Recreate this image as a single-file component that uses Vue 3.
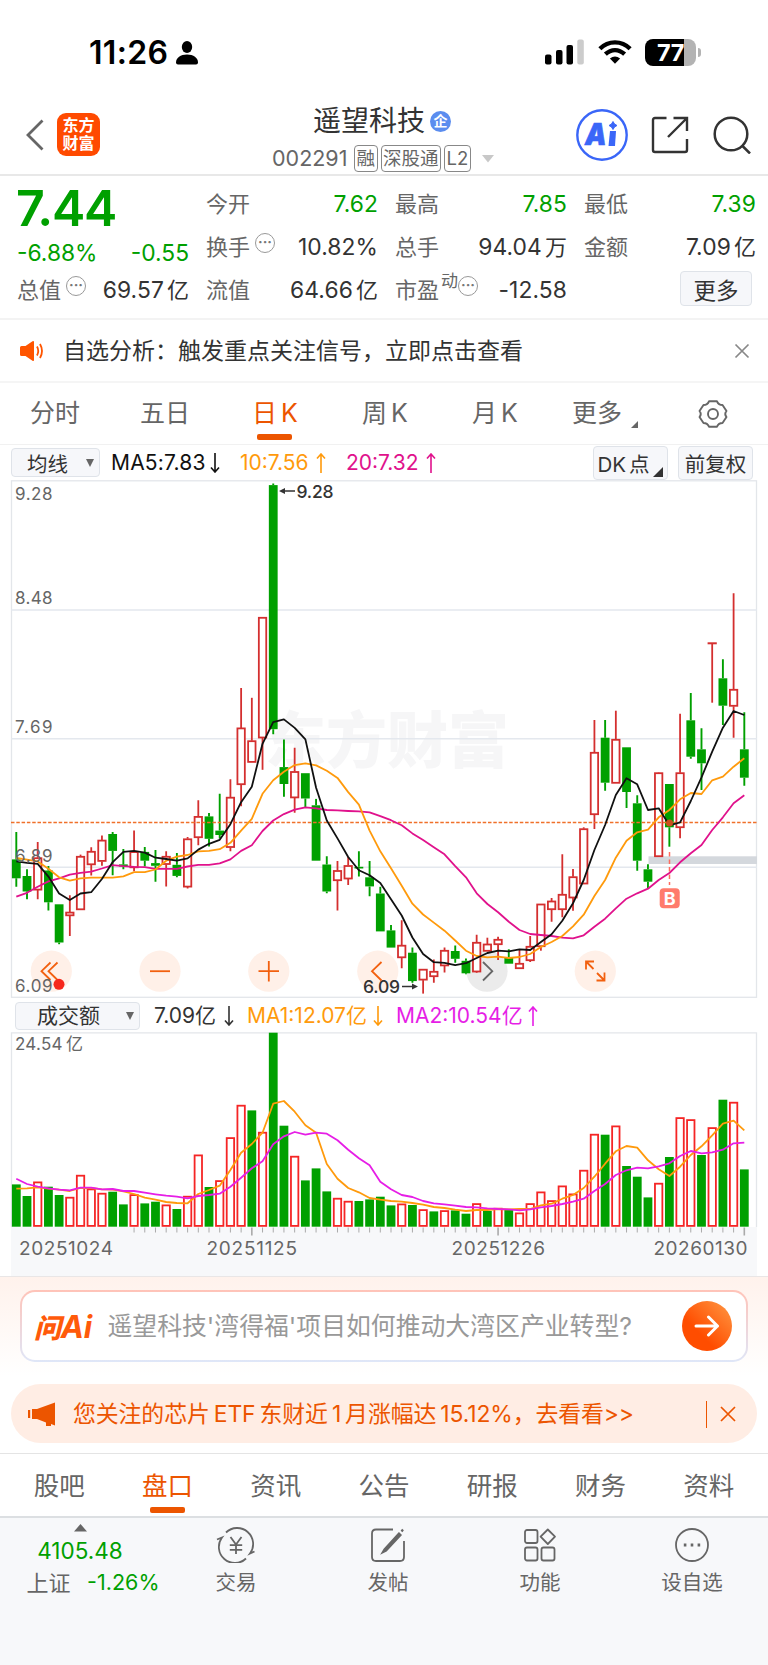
<script setup>
import { ref } from 'vue'

const periods = [['分时'], ['五日'], ['日', 'K'], ['周', 'K'], ['月', 'K']]
const activePeriod = ref('日')
const sections = ['股吧', '盘口', '资讯', '公告', '研报', '财务', '资料']
const activeSection = ref('盘口')
const showNotice = ref(true)
const showPromo = ref(true)

// distance between two trading days
const STEP = 10.706
const x = (i) => 16.3 + i * STEP

// [up, high, body top, body bottom, low]
const candles = [
    [0, 352, 379.4, 398.3, 406.8], [0, 389.2, 396, 411.5, 419.3], [1, 362.1, 377.7, 410.1, 419.3],
    [0, 386.1, 390.5, 422.3, 430.4], [0, 424.3, 424.3, 462.5, 464.2], [1, 415.2, 432.1, 435.8, 456.1],
    [1, 374.6, 376.3, 429.8, 429.8], [1, 367.2, 371.3, 384.8, 395.6], [1, 355.4, 360.1, 381.4, 385.8],
    [0, 352, 354, 370.9, 395.3], [0, 368.9, 384.4, 386.5, 389.2], [1, 350.6, 371.6, 387.8, 391.2],
    [0, 366.9, 371.9, 380.7, 386.5], [0, 369.9, 383.1, 385.8, 401.7], [1, 371.3, 376.3, 384.5, 406.4],
    [0, 373, 384.8, 395.9, 397.3], [1, 357.1, 358.8, 407.1, 408.5], [1, 320.2, 336.4, 357.7, 365.2],
    [0, 333.1, 336.4, 358.8, 366.5], [0, 313.8, 350.6, 355, 358.4], [1, 299.3, 317.2, 367.5, 371.3],
    [1, 208, 247.9, 304.7, 326.3], [1, 217.8, 260.7, 282.4, 282.4], [1, 137.3, 137.3, 258, 289.8],
    [0, 3.5, 5.1, 249.2, 254.3], [0, 259.4, 287.1, 304, 316.8], [1, 267.8, 291.5, 317.9, 332.7],
    [0, 293.2, 293.2, 318.5, 327], [0, 318.9, 325.3, 380.7, 380.7], [0, 376.3, 384.5, 411.5, 413.2],
    [1, 381.1, 390.5, 400.7, 430.4], [1, 377, 385.5, 399, 405.1], [0, 371.3, 386.8, 388.5, 396.6],
    [0, 381.1, 397.3, 406.4, 416.2], [0, 406.8, 413.5, 451.4, 451.4], [0, 445, 450.4, 467.6, 467.6],
    [1, 440.2, 465.2, 477.8, 488.2], [0, 467.6, 472.7, 501.1, 502.8], [1, 489.2, 489.2, 500.1, 513.6],
    [1, 479.4, 491.3, 496.7, 502.8], [1, 467.6, 470.3, 485.9, 492.6], [0, 465.6, 471, 478.8, 482.8],
    [0, 478.4, 480.8, 493.3, 494.3], [1, 454.7, 462.3, 492, 492.7], [1, 457.7, 464, 471.3, 471.3],
    [1, 456.7, 459.3, 464.7, 480], [0, 469.3, 477.7, 483.7, 483.7], [1, 469.3, 483.3, 488.7, 488.7],
    [1, 456, 466.3, 480.7, 482], [1, 424, 424, 466.7, 470.7], [1, 418, 421, 429.7, 441.7],
    [1, 374.3, 414.3, 429.7, 437.3], [1, 389, 396.7, 418, 430.7], [1, 347.3, 348.7, 404, 404],
    [1, 240, 272.3, 334.7, 349], [0, 240, 257.7, 302.7, 310.7], [1, 230.7, 259.3, 303.3, 303.3],
    [0, 267.3, 267.3, 312, 328], [0, 315.3, 323.3, 380.7, 390.7], [0, 384.3, 389.3, 401.7, 408],
    [1, 292.3, 292.7, 376.7, 376.7], [0, 304, 304, 347.3, 366.7], [1, 233.7, 292.7, 347.7, 358.3],
    [0, 213, 240.3, 276.7, 278.7], [0, 248.3, 269.3, 283.3, 310], [1, 162.7, 162.7, 163.7, 222.7],
    [0, 179.3, 198.3, 225.7, 245], [1, 113.3, 209.3, 226.3, 257.7], [0, 232.3, 269.3, 297.7, 305.7],
]

const ma5 = [
    381.4, 382.8, 383.8, 396.6, 413.5, 420, 413.5, 412.2, 399, 382.1, 371.9, 370.9, 372.6, 377.7, 379,
    380.7, 378.4, 369.6, 363.8, 359.8, 344.2, 322.2, 306.7, 263.8, 242.1, 239.4, 247.9, 259.4, 307.7,
    340.5, 358.4, 377, 390.2, 395.3, 403, 419.3, 435.5, 457.5, 474, 482.2, 482.8, 485.2, 483.2, 478,
    473, 470.7, 471.3, 469.3, 470, 462, 454.3, 440.7, 423.3, 400, 370, 345, 315, 298.3, 304.3, 330,
    328.3, 345.3, 342.3, 321, 297.3, 271.7, 247.7, 231, 235,
]
const ma10 = [
    378, 379.7, 381.4, 388.8, 397.3, 400.7, 398.3, 397.6, 397.6, 397.6, 396.3, 392.2, 392.2, 389.5,
    380.7, 376.7, 375, 371.3, 370.9, 369.2, 362.8, 350.6, 338.8, 313.8, 300.3, 291.8, 285.1, 283.4,
    285.4, 290.8, 297.9, 312.1, 324.6, 350.6, 371.3, 388.2, 405.7, 423.7, 434.5, 442.6, 450.7, 460.5,
    470.7, 476, 477.3, 476.7, 478, 477, 474, 467, 462, 456, 446.3, 434.7, 416, 400, 377.7, 360.7,
    352.3, 349.7, 337.3, 330, 319.3, 313, 314, 300.3, 296.7, 286.7, 278.3,
]
const ma20 = [
    416.6, 412.8, 406.8, 401.4, 398.3, 394.6, 392.9, 391.6, 388.5, 385.1, 386.1, 386.8, 387.2, 388.8,
    388.8, 388.8, 386.5, 384.8, 384.8, 383.4, 379.4, 370.9, 365.2, 351, 340.5, 334.1, 329.7, 327.3,
    328.3, 330, 330.4, 331, 331.4, 332.4, 336.1, 340.2, 345.2, 353.4, 360.1, 367.2, 374.3, 386.1,
    397.3, 413.3, 424, 432.3, 441.7, 450, 454, 455, 456, 457.7, 458.3, 455.3, 446.7, 438.7, 428.3,
    418.7, 413.3, 408.7, 400, 393, 382.3, 373.3, 365, 350, 337.3, 323.3, 315.3,
]

// bar heights, negative = falling day
const volumes = [
    -42.3, -30.7, 45, -40, -31.7, 29.7, 51.7, 38, 33.7, -35, -22.3, 32.3, -23.3, -25, 22, -17.7, 30.7,
    72, -39.7, 46.3, 89.3, 121.7, -116.3, 94.7, -194, -101, 70.7, -46.3, -58.3, -35.3, 28.7, 25.7,
    -25.7, -27.3, -30, -21.3, 23, -21.7, 17.3, -15.3, 16.3, -16.3, -13, 23.3, -15.7, 18.7, -16.7, 14,
    23.3, 35, 26.3, 41, 33, 56.7, 92.7, -92, 101, -60.7, -50, -29.3, 43.7, -69.7, 109.3, 107.3, -71.7,
    99.3, -127, 124.7, -57.3,
]
const volMa1 = [
    581, 580, 577, 581, 584, 588, 579, 579, 583, 584, 589, 597, 608, 614, 621, 624, 625, 597, 585, 572,
    525, 473, 447, 413, 326, 318, 350, 391, 413, 507, 551, 579, 592, 609, 614, 618, 620, 624, 629, 636,
    639, 644, 648, 645, 645, 642, 643, 642, 642, 631, 626, 611, 600, 579, 545, 506, 469, 453, 458, 496,
    523, 543, 515, 480, 454, 421, 386, 377, 406,
]
const volMa2 = [
    551, 567, 575, 580, 584, 586, 578, 578, 583, 582, 588, 588, 593, 598, 602, 605, 610, 603, 600, 596,
    575, 548, 520, 499, 448, 424, 411, 419, 413, 416, 436, 464, 490, 511, 560, 583, 600, 606, 618, 625,
    628, 632, 636, 637, 640, 642, 643, 646, 643, 637, 633, 627, 620, 611, 588, 567, 540, 526, 518, 520,
    514, 505, 483, 468, 475, 472, 464, 445, 443,
]

const line = (values) => values.map((v, i) => `${x(i).toFixed(1)},${v.toFixed(1)}`).join(' ')
const volLine = (values) => line(values.map((v) => v / 3 - 37))

const ticks = Array.from({ length: 58 }, (_, n) => n + 11)
const isMajor = (t) => [22, 45, 68].includes(t)
const priceLabels = [
    ['9.28', 19.5], ['8.48', 124], ['7.69', 253], ['6.89', 382], ['6.09', 511.5],
]
</script>

<template>
    <div class="page">
        <div class="status">
            <div class="clock">
                <span>11:26</span>
                <svg width="22" height="24" viewBox="0 0 22 24">
                    <ellipse cx="11" cy="6" rx="5.2" ry="6" />
                    <path d="M0 21.5C0 17 4.500 13.500 11 13.500S22 17 22 21.500Q22 23.500 20 23.500H2Q0 23.500 0 21.500Z" />
                </svg>
            </div>
            <div class="signals">
                <svg width="40" height="26" viewBox="0 0 40 26">
                    <rect x="0" y="15.500" width="6.500" height="10" rx="2" />
                    <rect x="11" y="11" width="6.500" height="14.500" rx="2" />
                    <rect x="21.500" y="6" width="6.500" height="19.500" rx="2" />
                    <rect x="32.300" y="0.500" width="6.500" height="25" rx="2" fill="#ccc" />
                </svg>
                <svg width="34" height="26" viewBox="0 0 36 26" fill="none" stroke="#000" stroke-width="4.600">
                    <path d="M2 9.500C11 .500 25 .500 34 9.500" />
                    <path d="M7.800 15.300C14 9.500 22 9.500 28.200 15.300" />
                    <path d="M18 25.500L12.600 20Q18 15.500 23.400 20Z" fill="#000" stroke="none" />
                </svg>
                <div class="battery"><span>77</span></div>
            </div>
        </div>

        <header class="nav">
            <div class="nav-left">
                <svg width="18" height="32" viewBox="0 0 18 32" fill="none" stroke="#666" stroke-width="2.800">
                    <path d="M16.500 1.500L2 16L16.500 30.500" />
                </svg>
                <div class="logo">东方<br>财富</div>
            </div>
            <div class="nav-title">
                <div class="name">遥望科技<i>企</i></div>
                <div class="code">
                    <span class="num">002291</span>
                    <b>融</b><b>深股通</b><b>L2</b>
                    <svg width="12" height="8" viewBox="0 0 12 8"><path d="M0 0H12L6 7.500Z" fill="#c8c8c8" /></svg>
                </div>
            </div>
            <div class="nav-right">
                <svg width="52" height="52" viewBox="0 0 52 52">
                    <circle cx="26" cy="26" r="24.700" fill="none" stroke="#3a66f8" stroke-width="2.400" />
                    <text x="9" y="36" class="ai" textLength="21.500" lengthAdjust="spacingAndGlyphs">A</text>
                    <path d="M34 22H40L39 37H32.500Z" fill="#3a66f8" />
                    <path d="M37 12.500Q38 15.500 41 16.500Q38 17.500 37 20.500Q36 17.500 33 16.500Q36 15.500 37 12.500Z" fill="#3a66f8" stroke="#3a66f8" />
                </svg>
                <svg class="share" width="38" height="38" viewBox="0 0 38 38" fill="none" stroke="#333" stroke-width="2.400">
                    <path d="M15.500 2H4Q2 2 2 4V34Q2 36 4 36H34Q36 36 36 34V23M22.500 2H36V15M35.500 2.500L17 21" />
                </svg>
                <svg width="38" height="38" viewBox="0 0 38 38" fill="none" stroke="#333" stroke-width="2.500">
                    <circle cx="18" cy="18" r="16.300" />
                    <path d="M29 29.500L37 37.500" />
                </svg>
            </div>
        </header>

        <section class="quote">
            <div class="quote-main">
                <div class="price">7.44</div>
                <div class="change"><span>-6.88%</span><span>-0.55</span></div>
                <div class="cell"><label>总值<i class="dots">···</i></label><span>69.57<em>亿</em></span></div>
            </div>
            <div class="quote-grid">
                <div class="cell"><label>今开</label><span class="down">7.62</span></div>
                <div class="cell"><label>最高</label><span class="down">7.85</span></div>
                <div class="cell"><label>最低</label><span class="down">7.39</span></div>
                <div class="cell"><label>换手<i class="dots">···</i></label><span>10.82%</span></div>
                <div class="cell"><label>总手</label><span>94.04<em>万</em></span></div>
                <div class="cell"><label>金额</label><span>7.09<em>亿</em></span></div>
                <div class="cell"><label>流值</label><span>64.66<em>亿</em></span></div>
                <div class="cell"><label>市盈<sup>动</sup><i class="dots tight">···</i></label><span>-12.58</span></div>
                <div class="cell end"><button class="chip more">更多</button></div>
            </div>
        </section>

        <section class="notice">
            <template v-if="showNotice">
                <svg width="24" height="22" viewBox="0 0 24 22">
                    <path d="M1.500 6H5.500L12.500 1.200Q14 .500 14 2V20Q14 21.500 12.500 20.800L5.500 16H1.500Q0 16 0 14.500V7.500Q0 6 1.500 6Z" fill="#ff5500" />
                    <path d="M17 6.500Q19.500 11 17 15.500M20 4Q24 11 20 18" fill="none" stroke="#ff5500" stroke-width="1.800" />
                </svg>
                <span>自选分析：触发重点关注信号，立即点击查看</span>
                <svg class="close" width="16" height="16" viewBox="0 0 16 16" stroke="#888" stroke-width="1.700" @click="showNotice = false">
                    <path d="M1.500 1.500L14.500 14.500M14.500 1.500L1.500 14.500" />
                </svg>
            </template>
        </section>

        <nav class="periods">
            <div v-for="[name, k] in periods" :key="name" :class="{ active: name === activePeriod }" @click="activePeriod = name">{{ name }}<em v-if="k">{{ k }}</em></div>
            <div class="with-corner">更多<i></i></div>
            <div class="gear">
                <svg width="30" height="30" viewBox="0 0 30 30" fill="none" stroke="#666" stroke-width="1.900">
                    <path d="M11 2.300H19Q20.500 6 24.500 6L28.500 12Q26 15 28.500 18L24.500 24Q20.500 24 19 27.700H11Q9.500 24 5.500 24L1.500 18Q4 15 1.500 12L5.500 6Q9.500 6 11 2.300Z" stroke-linejoin="round" />
                    <circle cx="15" cy="15" r="5" />
                </svg>
            </div>
        </nav>

        <div class="ma-bar">
            <button class="chip select">均线<i></i></button>
            <span class="m5">MA5:7.83<svg width="10" height="20" viewBox="0 0 10 20"><path d="M5 0V19M1 14.500L5 19L9 14.500" /></svg></span>
            <span class="m10">10:7.56<svg width="10" height="20" viewBox="0 0 10 20"><path d="M5 20V1M1 5.500L5 1L9 5.500" /></svg></span>
            <span class="m20">20:7.32<svg width="10" height="20" viewBox="0 0 10 20"><path d="M5 20V1M1 5.500L5 1L9 5.500" /></svg></span>
            <button class="chip tall dk">DK<em>点</em><i></i></button>
            <button class="chip tall">前复权</button>
        </div>

        <svg class="kline" width="768" height="518" viewBox="0 0 768 518">
            <text x="265" y="283" class="watermark" textLength="244">东方财富</text>
            <rect x="11.500" y="0.800" width="745" height="516.500" fill="none" stroke="#e3e6ea" stroke-width="1.300" />
            <path d="M11 130H757M11 258.700H757M11 387.300H757" stroke="#e4e8ee" stroke-width="1.600" />
            <rect x="648.500" y="376.300" width="108.500" height="7.700" fill="#d4d8dd" />

            <circle cx="51.300" cy="491.200" r="20.600" class="knob" />
            <circle cx="160" cy="491.200" r="20.600" class="knob" />
            <circle cx="268.800" cy="491.200" r="20.600" class="knob" />
            <circle cx="377.800" cy="491.200" r="20.600" class="knob" />
            <circle cx="487" cy="491.200" r="20.600" class="knob dim" />
            <circle cx="595.300" cy="491.200" r="20.600" class="knob" />

            <g v-for="(c, i) in candles" :key="i" :class="c[0] ? 'rise' : 'fall'">
                <path :d="`M${x(i)} ${c[1]}V${c[2]}M${x(i)} ${c[3]}V${c[4]}`" />
                <rect v-if="c[0]" :x="x(i) - 3.7" :y="c[2] + 0.5" width="7.4" :height="Math.max(c[3] - c[2] - 1, 0.2)" />
                <rect v-else :x="x(i) - 4.4" :y="c[2]" width="8.8" :height="c[3] - c[2]" />
            </g>

            <path d="M11 342.600H757" stroke="#f0702a" stroke-width="1.500" stroke-dasharray="3.500 1.800" />
            <polyline :points="line(ma20)" class="ma" stroke="#e0128c" />
            <polyline :points="line(ma10)" class="ma" stroke="#ff9a0c" />
            <polyline :points="line(ma5)" class="ma" stroke="#111" />

            <circle cx="669.500" cy="343" r="3.500" fill="#c9501e" />
            <path d="M669.500 372V405" stroke="#ff6b5e" stroke-width="1.500" stroke-dasharray="4.500 3" />
            <rect x="659.700" y="408.300" width="20" height="20" rx="4" fill="#ff7b6c" />
            <text x="669.600" y="424.700" class="buy">B</text>

            <g class="knob-icon">
                <path d="M50.500 482.500L41.500 491.200L50.500 500M57.500 482.500L48.500 491.200L57.500 500" />
                <path d="M150 491.200H170" />
                <path d="M258.500 491.200H279M268.800 481V501.500" />
                <path d="M381.500 482L372 491.200L381.500 500.500" />
                <path d="M483 482L492.300 491.200L483 500.500" stroke="#666" />
                <path d="M593.500 489L586.500 482M586 489.500V481.500H594M597 493L604 500M604.500 492.500V500.500H596.500" />
            </g>

            <text v-for="l in priceLabels" :key="l[0]" x="15" :y="l[1]" class="scale" textLength="37.500">{{ l[0] }}</text>
            <circle cx="59" cy="504.300" r="5.500" fill="#f6281e" />

            <path d="M284 11H295M402 506.500H413" stroke="#333" stroke-width="1.500" />
            <path d="M279 11L285 8V14ZM418 506.500L412 503.500V509.500Z" fill="#333" />
            <text x="296.500" y="17.800" class="mark" textLength="37">9.28</text>
            <text x="363" y="513" class="mark" textLength="37">6.09</text>
        </svg>

        <div class="ma-bar vol-bar">
            <button class="chip select wide">成交额<i></i></button>
            <span class="v0">7.09亿<svg width="10" height="20" viewBox="0 0 10 20"><path d="M5 0V19M1 14.500L5 19L9 14.500" /></svg></span>
            <span class="v1">MA1:12.07亿<svg width="10" height="20" viewBox="0 0 10 20"><path d="M5 0V19M1 14.500L5 19L9 14.500" /></svg></span>
            <span class="v2">MA2:10.54亿<svg width="10" height="20" viewBox="0 0 10 20"><path d="M5 20V1M1 5.500L5 1L9 5.500" /></svg></span>
        </div>

        <svg class="volume" width="768" height="244" viewBox="0 0 768 244">
            <rect x="11" y="195" width="746" height="49" fill="#f7f8fa" />
            <path d="M11.500 195V.800H756.500V195" fill="none" stroke="#e3e6ea" stroke-width="1.300" />
            <text x="15" y="18" class="scale" textLength="47.500">24.54</text>
            <text x="66" y="18" class="scale">亿</text>
            <g v-for="(v, i) in volumes" :key="i" :class="v > 0 ? 'rise bar' : 'fall'">
                <rect v-if="v > 0" :x="x(i) - 3.7" :y="195.4 - v" width="7.4" :height="v - 1.5" />
                <rect v-else :x="x(i) - 4.4" :y="194.7 + v" width="8.8" :height="-v" />
            </g>
            <polyline :points="volLine(volMa1)" class="ma" stroke="#ff9a0c" />
            <polyline :points="volLine(volMa2)" class="ma" stroke="#e61ee6" />
            <path v-for="t in ticks" :key="t" :d="`M${x(t)} 195.5V${isMajor(t) ? 203.5 : 200.5}`" stroke="#aaa" :stroke-width="isMajor(t) ? 1.6 : 1" />
            <text x="19" y="223" class="date" textLength="94">20251024</text>
            <text x="206.500" y="223" class="date" textLength="90.500">20251125</text>
            <text x="451.500" y="223" class="date" textLength="93.500">20251226</text>
            <text x="653.500" y="223" class="date" textLength="94">20260130</text>
        </svg>

        <section class="ask">
            <div class="ask-box">
                <span class="ask-logo"><i>问</i>Ai</span>
                <span class="ask-text">遥望科技'湾得福'项目如何推动大湾区产业转型?</span>
                <button class="go">
                    <svg width="26" height="22" viewBox="0 0 26 22" fill="none" stroke="#fff" stroke-width="3" stroke-linecap="round" stroke-linejoin="round">
                        <path d="M2 11H23.500M14.500 2L23.500 11L14.500 20" />
                    </svg>
                </button>
            </div>
        </section>

        <section class="promo">
            <div v-if="showPromo" class="promo-box">
                <svg width="28" height="24" viewBox="0 0 28 24" fill="#ec5500">
                    <path d="M0 8H2.200V16H0ZM4 7H9L27 .500V23.500L23 22V24H18V20.500L9 17H4Z" />
                </svg>
                <span class="promo-text">您关注的芯片<s></s>ETF<s></s>东财近<s></s>1<s></s>月涨幅达<s></s>15.12%，去看看&gt;&gt;</span>
                <i class="bar"></i>
                <svg width="16" height="16" viewBox="0 0 16 16" stroke="#ec5500" stroke-width="1.700" @click="showPromo = false">
                    <path d="M1 1L15 15M15 1L1 15" />
                </svg>
            </div>
        </section>

        <nav class="sections">
            <div v-for="s in sections" :key="s" :class="{ active: s === activeSection }" @click="activeSection = s">{{ s }}</div>
        </nav>

        <footer class="dock">
            <div class="index">
                <svg width="13" height="8" viewBox="0 0 13 8"><path d="M0 7.500L6.500 0L13 7.500Z" fill="#666" /></svg>
                <div class="index-num">4105.48</div>
                <div class="index-row"><label>上证</label><span>-1.26%</span></div>
            </div>
            <div class="dock-item">
                <svg width="40" height="36" viewBox="0 0 40 36">
                    <path d="M10 5.500A16 16 0 0 1 34 26.500L38.500 24.500M30 31.500A16 16 0 0 1 6 10.500L1 12.500" />
                    <path d="M14.500 10L20 17.500L25.500 10M20 17.500V27M13.800 18.200H26.200M13.800 22.800H26.200" />
                </svg>
                <span>交易</span>
            </div>
            <div class="dock-item">
                <svg width="36" height="36" viewBox="0 0 36 36">
                    <path d="M23 2.500H6Q2 2.500 2 6.500V30Q2 34 6 34H30Q34 34 34 30V14" />
                    <path d="M29 6.500L14.500 22.500L13 25L16 23.500L30.500 8ZM31.500 4.500L33 2.500" fill="#666" stroke-width="2.200" />
                </svg>
                <span>发帖</span>
            </div>
            <div class="dock-item">
                <svg width="34" height="36" viewBox="0 0 34 36">
                    <rect x="2" y="3" width="12.500" height="13" rx="2" />
                    <rect x="2" y="20.500" width="12.500" height="13" rx="2" />
                    <rect x="18.500" y="20.500" width="13" height="13" rx="2" />
                    <path d="M24.800 2.500L32 9.700L24.800 17L17.600 9.700Z" stroke-linejoin="round" />
                </svg>
                <span>功能</span>
            </div>
            <div class="dock-item">
                <svg width="36" height="36" viewBox="0 0 36 36">
                    <circle cx="18" cy="18" r="16" />
                    <path d="M9.800 18H12.400M16.700 18H19.300M23.600 18H26.200" stroke-width="2.800" />
                </svg>
                <span>设自选</span>
            </div>
        </footer>
    </div>
</template>

<style>
body {
    margin: 0;
    background: #fff;
}
</style>

<style scoped>
.page {
    width: 768px;
    height: 1665px;
    overflow: hidden;
    background: #fff;
    color: #333;
    font-family: Inter, "Noto Sans CJK SC", sans-serif;
    line-height: 1;
}

.page * {
    box-sizing: border-box;
}

svg {
    display: block;
    flex: none;
}

i, em {
    font-style: normal;
}

button {
    font-family: inherit;
    padding: 0;
    border: none;
}

.status {
    height: 80px;
    padding: 24px 72px 0 89px;
    display: flex;
    justify-content: space-between;
    align-items: center;
    color: #000;
}

.clock {
    display: flex;
    align-items: center;
    gap: 8px;
    padding-top: 2px;
    font-size: 32px;
    font-weight: 600;
    letter-spacing: 0.3px;
}

.signals {
    display: flex;
    align-items: center;
    gap: 13px;
}

.battery {
    position: relative;
    width: 51px;
    height: 27px;
    border-radius: 8px;
    background: linear-gradient(90deg, #000 77%, #b3b3b3 77%);
    color: #fff;
    font-size: 23.5px;
    font-weight: 700;
    letter-spacing: -0.5px;
    text-align: center;
    line-height: 27px;
}

.battery::after {
    content: "";
    position: absolute;
    right: -5px;
    top: 9px;
    width: 3px;
    height: 9px;
    border-radius: 0 4px 4px 0;
    background: #b3b3b3;
}

.nav {
    height: 96px;
    border-bottom: 2px solid #e8e8e8;
    display: grid;
    grid-template-columns: 230px 1fr 230px;
}

.nav-left {
    display: flex;
    align-items: center;
    gap: 13px;
    padding: 15px 0 0 26px;
    height: 94px;
}

.logo {
    width: 43px;
    height: 43px;
    border-radius: 9px;
    background: #ff4a00;
    color: #fff;
    font-size: 16px;
    font-weight: 700;
    line-height: 18px;
    padding-top: 3px;
    text-align: center;
}

.nav-title {
    padding-top: 26px;
}

.name {
    display: flex;
    align-items: center;
    padding-left: 83px;
    font-size: 28px;
    line-height: 31px;
    white-space: nowrap;
}

.name i {
    width: 21px;
    height: 21px;
    margin-left: 5px;
    border-radius: 50%;
    background: #5b8def;
    color: #fff;
    font-size: 14px;
    font-weight: 700;
    line-height: 20px;
    text-align: center;
}

.code {
    display: flex;
    align-items: center;
    margin-top: 8px;
    padding-left: 42px;
    color: #666;
    white-space: nowrap;
}

.num {
    font-size: 21.5px;
    width: 82px;
    letter-spacing: 0;
}

.code b {
    height: 27px;
    margin-right: 3px;
    padding: 0 1.500px;
    border: 1.500px solid #888;
    border-radius: 4px;
    font-size: 18.500px;
    font-weight: 400;
    line-height: 24px;
}

.code svg {
    margin-left: 8px;
}

.nav-right {
    height: 94px;
    display: flex;
    align-items: center;
    padding: 16px 0 0 37.5px;
}

.ai {
    font-size: 29.5px;
    font-weight: 900;
    font-style: italic;
    fill: #3a66f8;
    stroke: #3a66f8;
    stroke-width: 0.6;
}

.share {
    margin: 0 24px 0 23px;
}

.quote {
    height: 144px;
    padding: 7px 12px 0 17px;
    border-bottom: 2px solid #f3f3f3;
    display: flex;
    gap: 17px;
    color: #333;
}

.quote-main {
    width: 172px;
}

.price {
    height: 50px;
    color: #00a000;
    font-size: 50px;
    font-weight: 600;
    letter-spacing: -1.3px;
    margin-left: -1px;
}

.change {
    height: 36px;
    padding-top: 5px;
    display: flex;
    align-items: center;
    justify-content: space-between;
    color: #00a000;
    font-size: 22.8px;
}

.quote-grid {
    flex: 1;
    display: grid;
    grid-template-columns: repeat(3, 172px);
    grid-auto-rows: 43px;
    column-gap: 17px;
}

.cell {
    height: 43px;
    display: flex;
    align-items: center;
    justify-content: space-between;
    font-size: 22.8px;
    letter-spacing: 0.1px;
    white-space: nowrap;
}

.cell em {
    margin-left: 3px;
    font-size: 22px;
}

.cell label {
    display: flex;
    align-items: center;
    margin-top: -2px;
    color: #666;
    font-size: 22px;
    letter-spacing: 0;
}

.cell sup {
    font-size: 17px;
    line-height: 17px;
    margin: -16px 0 0 2px;
    vertical-align: baseline;
}

.cell.end {
    justify-content: flex-end;
    padding: 0 4px 4px 0;
}

.dots {
    width: 20px;
    height: 20px;
    margin: -7px 0 0 5px;
    border: 1.5px solid #999;
    border-radius: 50%;
    color: #777;
    font-size: 14px;
    font-weight: 700;
    line-height: 16px;
    text-align: center;
}

.dots.tight {
    margin-left: 0;
}

.down {
    color: #00a000;
}

.chip {
    border: 1.5px solid #dfe3e9;
    border-radius: 4px;
    background: #f6f7fa;
    color: #333;
    font-size: 20.500px;
    white-space: nowrap;
}

.more {
    width: 72px;
    height: 35px;
    font-size: 22.500px;
}

.notice {
    height: 63px;
    padding: 1px 18px 0 20px;
    border-bottom: 2px solid #f5f5f5;
    display: flex;
    align-items: center;
    font-size: 23px;
}

.notice span {
    margin-left: 19px;
}

.close {
    margin-left: auto;
}

.periods {
    height: 62px;
    display: grid;
    grid-template-columns: repeat(7, 110px);
    border-bottom: 1px solid #f1f1f1;
    font-size: 25px;
    color: #666;
}

.periods > div,
.sections > div {
    position: relative;
    display: flex;
    justify-content: center;
    align-items: center;
}

.periods em {
    margin-left: 4px;
}

.periods .active,
.sections .active {
    color: #ec5500;
}

.periods .active::after,
.sections .active::after {
    content: "";
    position: absolute;
    left: 50%;
    bottom: 4px;
    width: 35px;
    height: 6px;
    margin-left: -18px;
    border-radius: 2px;
    background: #ec5500;
}

.sections .active::after {
    bottom: 3px;
    margin-left: -17px;
}

.with-corner i {
    width: 0;
    height: 0;
    margin: 21px 0 0 9px;
    border-left: 7px solid transparent;
    border-bottom: 7px solid #666;
}

.periods .gear {
    padding-right: 4px;
}

.ma-bar {
    height: 35px;
    padding-left: 11px;
    display: flex;
    align-items: center;
    font-size: 21px;
    white-space: nowrap;
}

.ma-bar span {
    display: flex;
    align-items: center;
    justify-content: space-between;
}

.ma-bar svg {
    fill: none;
    stroke: currentColor;
    stroke-width: 1.600;
}

.select {
    display: flex;
    align-items: center;
    justify-content: space-between;
    width: 89px;
    height: 29px;
    padding: 0 5px 0 15px;
}

.select i {
    border: 4px solid transparent;
    border-top: 8px solid #666;
    border-bottom: none;
}

.m5 {
    width: 109px;
    margin-left: 11px;
    color: #111;
    letter-spacing: 0.2px;
}

.m10 {
    width: 86px;
    margin-left: 20px;
    color: #ff9a0c;
}

.m20 {
    width: 90px;
    margin-left: 20px;
    color: #e0128c;
}

.tall {
    width: 75px;
    height: 34px;
    margin-left: 10px;
}

.dk {
    position: relative;
    margin-left: auto;
    padding-right: 14px;
}

.dk em {
    margin-left: 3px;
}

.dk + .tall {
    margin-right: 15px;
}

.dk i {
    position: absolute;
    right: 4px;
    bottom: 2px;
    border-left: 10px solid transparent;
    border-bottom: 10px solid #333;
}

.vol-bar {
    height: 34px;
    padding-left: 15px;
    padding-top: 1px;
}

.wide {
    width: 125px;
    height: 28px;
    padding-left: 21px;
    font-size: 21px;
    line-height: 22px;
}

.v0 {
    width: 80px;
    margin-left: 14px;
}

.v1 {
    width: 136px;
    margin-left: 13px;
    color: #ff9a0c;
}

.v2 {
    width: 142px;
    margin-left: 13px;
    color: #e61ee6;
}

.watermark {
    font-size: 61px;
    font-weight: 900;
    fill: #f6f6f7;
}

.knob {
    fill: #fff0e8;
}

.knob.dim {
    fill: #ebebeb;
}

.knob-icon {
    fill: none;
    stroke: #f2600f;
    stroke-width: 1.8;
}

.rise {
    fill: #fff;
    stroke: #d42f2f;
    stroke-width: 1.8;
}

.rise.bar {
    stroke: #f52525;
}

.fall {
    fill: #00a000;
}

.fall path {
    stroke: #00a000;
    stroke-width: 1.9;
}

.ma {
    fill: none;
    stroke-width: 1.8;
    stroke-linejoin: round;
}

.buy {
    fill: #fff;
    font-size: 18px;
    font-weight: 700;
    text-anchor: middle;
}

.scale {
    fill: #666;
    font-size: 17px;
}

.mark {
    fill: #333;
    font-size: 17.500px;
    font-weight: 500;
}

.date {
    fill: #666;
    font-size: 19px;
}

.ask {
    height: 100px;
    padding: 13px 20px 0;
    border-top: 1px solid #e9e6e6;
    background: linear-gradient(#fff2ec, #fff);
}

.ask-box {
    height: 72px;
    display: flex;
    align-items: center;
    padding: 0 14px 0 12px;
    border: 2px solid transparent;
    border-radius: 15px;
    background: linear-gradient(#fff, #fff) padding-box, linear-gradient(#ffc3b8, #dfe6f8) border-box;
}

.ask-logo {
    width: 73.5px;
    color: #ff5a0a;
    font-size: 31px;
    font-weight: 700;
    font-style: italic;
    letter-spacing: -0.2px;
    white-space: nowrap;
}

.ask-logo i {
    font-style: italic;
    font-weight: 900;
    font-size: 27px;
}

.ask-text {
    color: #999;
    font-size: 24.85px;
    white-space: nowrap;
}

.go {
    width: 50px;
    height: 50px;
    margin-left: auto;
    border-radius: 50%;
    background: linear-gradient(45deg, #ff4d00 35%, #ff9a45);
    display: flex;
    align-items: center;
    justify-content: center;
}

.promo {
    height: 77px;
    padding: 8px 11px 0;
}

.promo-box {
    height: 59px;
    border-radius: 30px;
    background: #ffede4;
    color: #ec5500;
    display: flex;
    align-items: center;
    padding: 1px 21px 0 17px;
}

.promo-text {
    margin-left: 17px;
    font-size: 22.9px;
    letter-spacing: -0.1px;
    white-space: nowrap;
}

.promo-text s {
    display: inline-block;
    width: 4px;
}

.bar {
    width: 1.500px;
    height: 27px;
    margin: 0 13px 0 auto;
    background: #ec5500;
}

.sections {
    height: 63px;
    padding: 1px 5px 0;
    display: grid;
    grid-template-columns: repeat(7, 1fr);
    border-top: 1.500px solid #e4e4e4;
    font-size: 25.5px;
    color: #666;
}

.dock {
    height: 149px;
    padding: 0 0 0 8px;
    border-top: 2px solid #dcdfe2;
    background: #f7f8fa;
    display: grid;
    grid-template-columns: 152px repeat(4, 152px);
    color: #666;
}

.index {
    display: flex;
    flex-direction: column;
    align-items: center;
    padding: 6px 8px 0 0;
}

.index-num {
    margin-top: 8px;
    color: #00a000;
    font-size: 22.5px;
}

.index-row {
    width: 133px;
    display: flex;
    align-items: center;
    justify-content: space-between;
    margin: 9px 0 0 26px;
    font-size: 21.5px;
    color: #00a000;
}

.index-row label {
    color: #666;
    font-size: 22px;
}

.dock-item {
    display: flex;
    flex-direction: column;
    align-items: center;
    padding-top: 9px;
    font-size: 20.500px;
}

.dock-item svg {
    fill: none;
    stroke: #666;
    stroke-width: 1.8;
}

.dock-item span {
    margin-top: 10px;
}
</style>
